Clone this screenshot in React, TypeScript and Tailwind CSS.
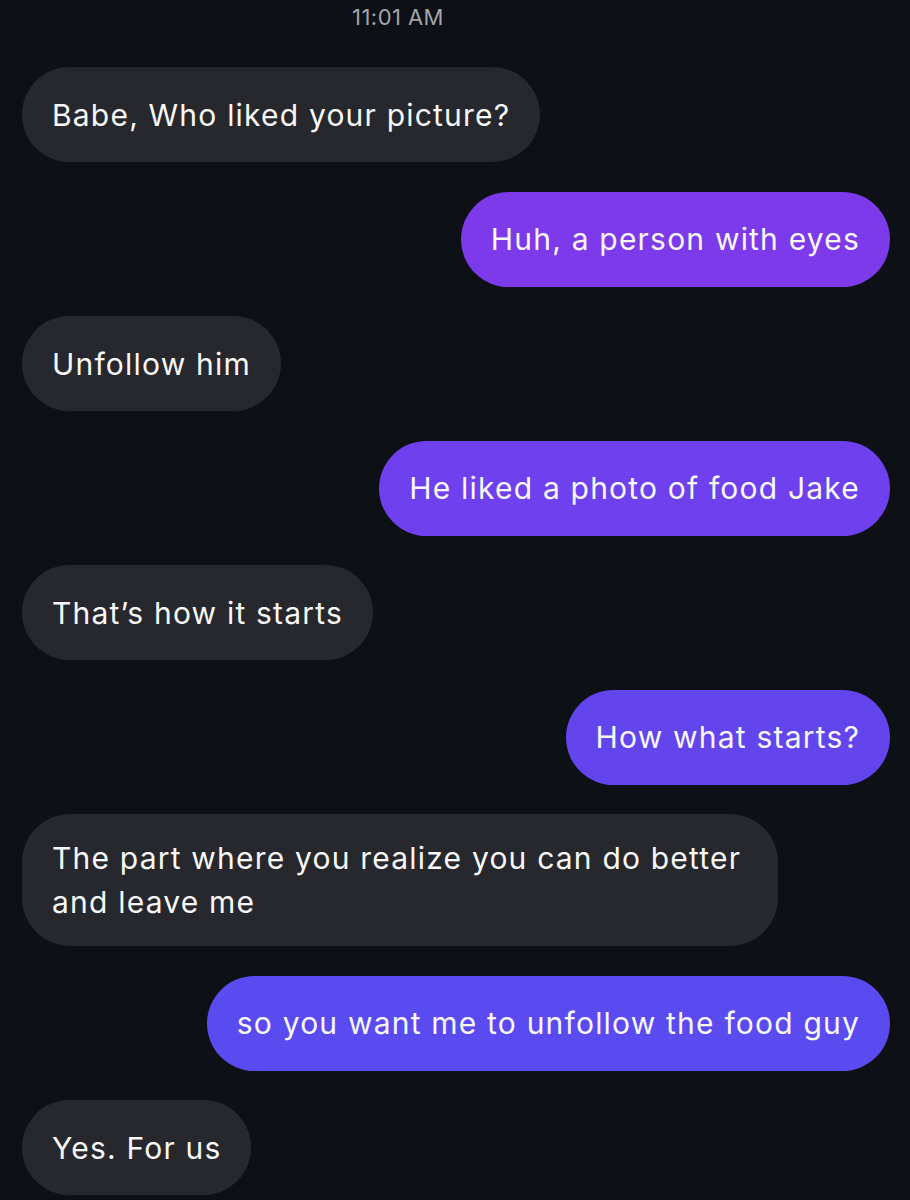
import React from 'react'

type Msg = { text: string; mine: boolean; bg?: string }

const messages: Msg[] = [
  { text: 'Babe, Who liked your picture?', mine: false },
  { text: 'Huh, a person with eyes', mine: true, bg: 'bg-[#7c3aeb]' },
  { text: 'Unfollow him', mine: false },
  { text: 'He liked a photo of food Jake', mine: true, bg: 'bg-[#6e40ee]' },
  { text: 'That’s how it starts', mine: false },
  { text: 'How what starts?', mine: true, bg: 'bg-[#6345ee]' },
  { text: 'The part where you realize you can do better and leave me', mine: false },
  { text: 'so you want me to unfollow the food guy', mine: true, bg: 'bg-[#5a4bf0]' },
  { text: 'Yes. For us', mine: false },
]

function Bubble({ msg }: { msg: Msg }) {
  const color = msg.mine ? msg.bg : 'bg-[#26282d]'
  return (
    <div className={msg.mine ? 'flex justify-end' : 'flex justify-start'}>
      <div
        className={`${color} flex min-h-[95px] max-w-[756px] items-center rounded-[48px] px-[30px] py-[22px] text-[30px] leading-[44px] tracking-[0.04em] text-[#f7f7f8]`}
      >
        {msg.text}
      </div>
    </div>
  )
}

export default function App() {
  return (
    <div
      className="h-[1200px] w-[910px] overflow-hidden bg-[#0d1015] pl-[22px] pr-[20px]"
      style={{ fontFamily: 'Inter, "Noto Sans", sans-serif' }}
    >
      <div className="pr-[116px] pt-[3px] text-center text-[22px] leading-[28px] tracking-[0.02em] text-[#a2a5aa]">
        11:01 AM
      </div>
      <div className="mt-[36px] flex flex-col gap-[29.5px]">
        {messages.map((m, i) => (
          <Bubble key={i} msg={m} />
        ))}
      </div>
    </div>
  )
}
